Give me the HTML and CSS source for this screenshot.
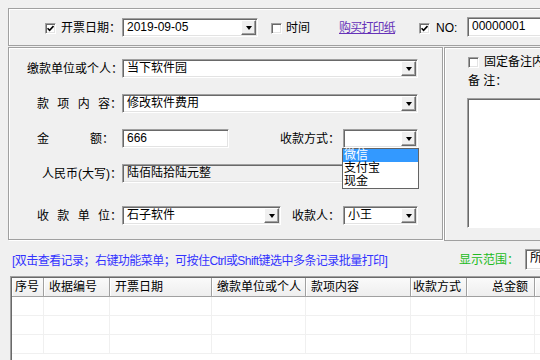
FILE: index.html
```html
<!DOCTYPE html>
<html lang="zh-CN">
<head>
<meta charset="utf-8">
<title>收款收据</title>
<link rel="stylesheet" href="styles.css">
</head>
<body>
<div class="top">
  <span class="cb cb-date checked"><svg viewBox="0 0 7 7" width="7" height="7"><path d="M0.5 3.2 L2.6 5.4 L6.5 1" fill="none" stroke="#000" stroke-width="1.6"/></svg></span>
  <span class="tlabel tl-date">开票日期：</span>
  <div class="combo w-date"><span class="val">2019-09-05</span><span class="btn"></span></div>
  <span class="cb cb-time"></span>
  <span class="tlabel tl-time">时间</span>
  <a class="link" href="#">购买打印纸</a>
  <span class="cb cb-no checked"><svg viewBox="0 0 7 7" width="7" height="7"><path d="M0.5 3.2 L2.6 5.4 L6.5 1" fill="none" stroke="#000" stroke-width="1.6"/></svg></span>
  <span class="tlabel tl-no">NO:</span>
  <div class="input w-no"><span class="val">00000001</span></div>
</div>

<div class="main">
  <div class="left">
    <div class="row r1">
      <span class="lbl">缴款单位或个人：</span>
      <div class="combo w-full"><span class="val">当下软件园</span><span class="btn"></span></div>
    </div>
    <div class="row r2">
      <span class="lbl spaced"><i>款</i><i>项</i><i>内</i><i>容：</i></span>
      <div class="combo w-full"><span class="val">修改软件费用</span><span class="btn"></span></div>
    </div>
    <div class="row r3">
      <span class="lbl spaced amt"><i>金</i><i>额：</i></span>
      <div class="input w-amt"><span class="val">666</span></div>
      <span class="lbl2 l-way">收款方式：</span>
      <div class="drop">
        <div class="combo w-small"><span class="val"></span><span class="btn"></span></div>
        <ul class="list">
          <li class="sel">微信</li>
          <li>支付宝</li>
          <li>现金</li>
        </ul>
      </div>
    </div>
    <div class="row r4">
      <span class="lbl">人民币(大写)：</span>
      <div class="input ro w-full"><span class="val">陆佰陆拾陆元整</span></div>
    </div>
    <div class="row r5">
      <span class="lbl spaced"><i>收</i><i>款</i><i>单</i><i>位：</i></span>
      <div class="combo w-unit"><span class="val">石子软件</span><span class="btn"></span></div>
      <span class="lbl2 l-payee">收款人：</span>
      <div class="combo w-small"><span class="val">小王</span><span class="btn"></span></div>
    </div>
  </div>
  <div class="right">
    <div class="fixrow"><span class="cb"></span><span class="fixtxt">固定备注内容</span></div>
    <div class="memo-lbl">备 注：</div>
    <div class="memo"></div>
  </div>
</div>

<div class="bar">
  <span class="hint">[双击查看记录；右键功能菜单；可按住Ctrl或Shift键选中多条记录批量打印]</span>
  <span class="range">显示范围：</span>
  <div class="combo w-range"><span class="val">所有记录</span><span class="btn"></span></div>
</div>

<div class="grid">
  <div class="thead">
    <span class="th c1">序号</span>
    <span class="th c2">收据编号</span>
    <span class="th c3">开票日期</span>
    <span class="th c4">缴款单位或个人</span>
    <span class="th c5">款项内容</span>
    <span class="th c6">收款方式</span>
    <span class="th c7 num">总金额</span>
    <span class="th c8"></span>
  </div>
  <div class="trow"><span></span><span></span><span></span><span></span><span></span><span></span><span></span><span></span></div>
  <div class="trow"><span></span><span></span><span></span><span></span><span></span><span></span><span></span><span></span></div>
  <div class="trow"><span></span><span></span><span></span><span></span><span></span><span></span><span></span><span></span></div>
</div>
</body>
</html>
```

FILE: styles.css
```css
* { box-sizing: border-box; }
html, body { margin: 0; padding: 0; }
body {
  width: 540px;
  height: 360px;
  overflow: hidden;
  background: #f0f0f0;
  color: #000;
  font-family: "Liberation Sans", "Noto Sans CJK SC", sans-serif;
  font-size: 12px;
  line-height: 15px;
}

/* generic controls */
.cb {
  display: inline-flex;
  align-items: center;
  justify-content: center;
  width: 11px;
  height: 11px;
  flex: none;
  background: #fff;
  border: 1px solid;
  border-color: #a0a0a0 #fff #fff #a0a0a0;
  box-shadow: inset 1px 1px 0 #696969, inset -1px -1px 0 #e3e3e3;
}
.combo, .input {
  display: flex;
  flex: none;
  height: 19px;
  background: #fff;
  border: 1px solid;
  border-color: #a0a0a0 #fff #fff #a0a0a0;
  box-shadow: inset 1px 1px 0 #696969, inset -1px -1px 0 #e3e3e3;
  padding: 1px;
}
.val {
  flex: 1;
  padding-left: 3px;
  line-height: 15px;
  white-space: nowrap;
  overflow: hidden;
}
.btn {
  width: 15px;
  flex: none;
  background: #f0f0f0;
  border: 1px solid;
  border-color: #fff #696969 #696969 #fff;
  box-shadow: inset -1px -1px 0 #a0a0a0;
  display: flex;
  align-items: center;
  justify-content: center;
}
.btn::after {
  content: "";
  width: 0;
  height: 0;
  border-left: 3.5px solid transparent;
  border-right: 3.5px solid transparent;
  border-top: 4px solid #000;
  margin-top: 1px;
}
.input.ro { background: #f0f0f0; }

/* top strip */
.top {
  margin: 8px 0 0 8px;
  width: 560px;
  height: 38px;
  border: 1px solid #a0a0a0;
  box-shadow: inset 1px 1px 0 #fff;
  display: flex;
  align-items: center;
}
.tlabel { white-space: nowrap; flex: none; }
.cb-date { margin-left: 36px; margin-top: 2px; }
.tl-date { margin-left: 5px; width: 61px; padding-top: 3px; }
.w-date { width: 136px; }
.cb-time { margin-left: 13px; margin-top: 2px; }
.tl-time { margin-left: 4px; width: 53px; padding-top: 3px; }
.link {
  width: 80px;
  flex: none;
  color: #6633b8;
  text-decoration: underline;
  letter-spacing: -0.8px;
  padding-top: 3px;
}
.cb-no { margin-top: 2px; }
.tl-no { margin-left: 6px; width: 31px; padding-top: 3px; }
.w-no { width: 100px; height: 20px; }

/* main area */
.main {
  display: flex;
  margin: 1px 0 0 8px;
}
.left {
  width: 435px;
  height: 193px;
  flex: none;
  border: 1px solid #a0a0a0;
  box-shadow: inset 1px 1px 0 #fff, 1px 1px 0 #fff;
  padding-top: 11px;
}
.right {
  width: 120px;
  height: 194px;
  flex: none;
  margin-left: 1px;
  border: 1px solid #a0a0a0;
  box-shadow: inset 1px 1px 0 #fff;
  padding: 8px 0 0 23px;
}
.row {
  display: flex;
  align-items: center;
  height: 19px;
}
.r2, .r3, .r4 { margin-top: 16px; }
.r5 { margin-top: 23px; }
.lbl {
  flex: none;
  width: 95px;
  margin-left: 18px;
  text-align: right;
  white-space: nowrap;
  padding-top: 2px;
}
.lbl.spaced {
  display: flex;
  justify-content: space-between;
  width: 85px;
  margin-left: 28px;
}
.lbl.spaced.amt { width: 77px; margin-right: 8px; }
.lbl i { font-style: normal; }
.w-full { width: 296px; }
.w-amt { width: 107px; }
.w-small { width: 75px; }
.w-unit { width: 159px; }
.lbl2 {
  flex: none;
  text-align: right;
  white-space: nowrap;
  padding-right: 3px;
  padding-top: 2px;
}
.l-way { width: 114px; }
.l-payee { width: 62px; }

.drop { position: relative; flex: none; }
.list {
  position: absolute;
  left: -1px;
  top: 19px;
  width: 77px;
  margin: 0;
  padding: 0;
  list-style: none;
  background: #fff;
  border: 1px solid #646464;
  z-index: 2;
}
.list li {
  height: 13px;
  line-height: 13px;
  padding-left: 1px;
}
.list li.sel { background: #3399ff; color: #fff; }

.fixrow { display: flex; align-items: center; height: 13px; }
.fixtxt { margin-left: 5px; white-space: nowrap; }
.memo-lbl { margin-top: 5px; line-height: 15px; white-space: nowrap; }
.memo {
  margin: 9px 0 0 -1px;
  width: 100px;
  height: 130px;
  background: #fff;
  border: 1px solid;
  border-color: #a0a0a0 #fff #fff #a0a0a0;
  box-shadow: inset 1px 1px 0 #696969;
}

/* hint bar */
.bar {
  display: flex;
  align-items: center;
  height: 34px;
  margin-top: 1px;
}
.hint {
  flex: none;
  width: 447px;
  margin-left: 12px;
  color: #3333ff;
  white-space: nowrap;
  letter-spacing: -0.55px;
  padding-top: 4px;
}
.range {
  flex: none;
  width: 66px;
  color: #22bb22;
  white-space: nowrap;
  padding-top: 2px;
}
.w-range { width: 100px; height: 21px; }

/* record grid */
.grid {
  margin-left: 10px;
  width: 560px;
  height: 100px;
  background: #fff;
  border: 1px solid;
  border-color: #a0a0a0 #fff #fff #a0a0a0;
  box-shadow: inset 1px 1px 0 #696969;
  padding: 1px 0 0 1px;
}
.thead, .trow {
  display: grid;
  grid-template-columns: 32px 66px 102px 94px 105px 56px 68px 100px;
}
.thead {
  height: 19px;
  background: linear-gradient(#fafafa, #eeeeee);
  border-bottom: 1px solid #a0a0a0;
}
.th {
  border-right: 1px solid #a0a0a0;
  box-shadow: inset 1px 0 0 #fff;
  padding-left: 5px;
  line-height: 18px;
  white-space: nowrap;
  overflow: hidden;
}
.th.c1 { padding-left: 3px; }
.th.c6 { padding-left: 2px; }
.th.num { text-align: right; padding-right: 6px; padding-left: 0; }
.trow { height: 19px; }
.trow span {
  border-right: 1px solid #f0f0f0;
  border-bottom: 1px solid #f0f0f0;
}
```
